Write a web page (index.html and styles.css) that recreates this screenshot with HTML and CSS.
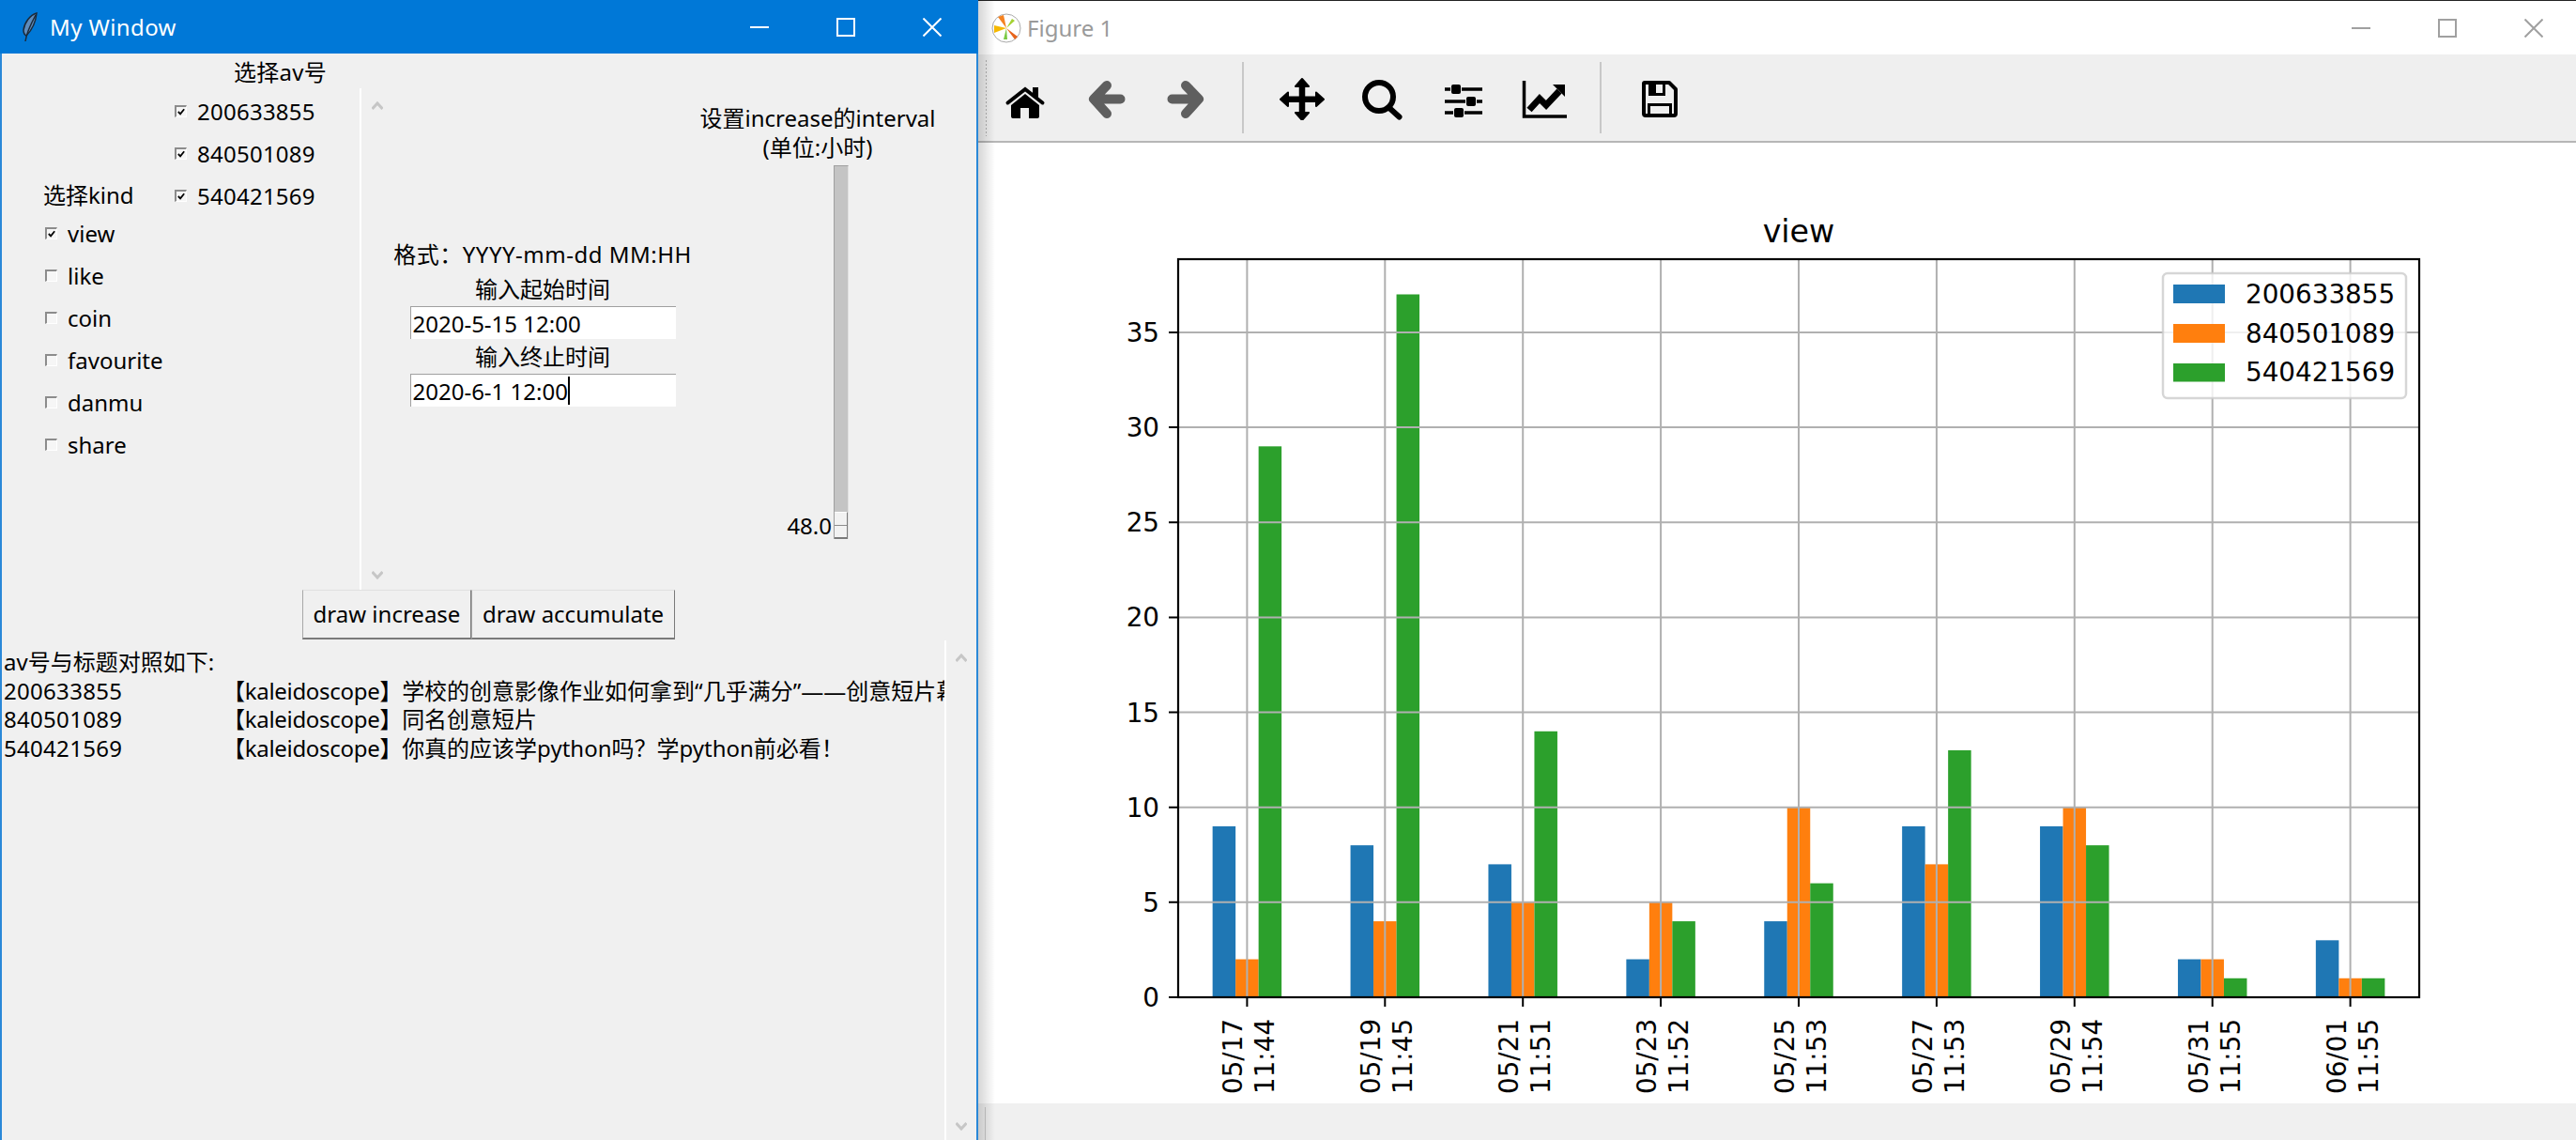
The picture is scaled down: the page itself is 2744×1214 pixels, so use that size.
FILE: index.html
```html
<!DOCTYPE html>
<html lang="zh-CN">
<head>
  <meta charset="UTF-8">
  <title>My Window</title>
  <link rel="stylesheet" href="styles.css">
</head>
<body>
<div class="desktop">

  <!-- tk window -->
  <div class="tk-window">
    <div class="tk-title">
      <svg class="feather" viewBox="0 0 18 32">
        <path d="M16 1C9 3 3 11 2 19c0 3 1 5 3 6C10 20 15 11 16 1z" fill="#5f8cbc" stroke="#1c2a3a" stroke-width="1.5"/>
        <path d="M4 31C5 24 9 14 15 3" fill="none" stroke="#1c2a3a" stroke-width="1.5"/>
      </svg>
      <span class="tk-title-text">My Window</span>
      <div class="caption-btns">
        <div class="caption-btn"><svg viewBox="0 0 20 20"><path d="M0 10H20"/></svg></div>
        <div class="caption-btn"><svg viewBox="0 0 20 20"><path d="M1 1H19V19H1z"/></svg></div>
        <div class="caption-btn"><svg viewBox="0 0 20 20"><path d="M0.5 0.5L19.5 19.5M19.5 0.5L0.5 19.5"/></svg></div>
      </div>
    </div>

    <div class="tk-top">
      <div class="kind-col">
        <div class="kind-head">选择kind</div>
        <div class="check-row"><span class="box"><svg viewBox="0 0 11 11"><path d="M2 5.5L4.5 8L9 2.5"/></svg></span>view</div>
        <div class="check-row"><span class="box"></span>like</div>
        <div class="check-row"><span class="box"></span>coin</div>
        <div class="check-row"><span class="box"></span>favourite</div>
        <div class="check-row"><span class="box"></span>danmu</div>
        <div class="check-row"><span class="box"></span>share</div>
      </div>

      <div class="av-col">
        <div class="av-head">选择av号</div>
        <div class="check-row"><span class="box"><svg viewBox="0 0 11 11"><path d="M2 5.5L4.5 8L9 2.5"/></svg></span>200633855</div>
        <div class="check-row"><span class="box"><svg viewBox="0 0 11 11"><path d="M2 5.5L4.5 8L9 2.5"/></svg></span>840501089</div>
        <div class="check-row"><span class="box"><svg viewBox="0 0 11 11"><path d="M2 5.5L4.5 8L9 2.5"/></svg></span>540421569</div>
      </div>

      <div class="canvas-col">
        <div class="rail rail-canvas">
          <svg class="chevron" viewBox="0 0 12 9"><path d="M0.5 8L6 2L11.5 8"/></svg>
          <svg class="chevron" viewBox="0 0 12 9"><path d="M0.5 1L6 7L11.5 1"/></svg>
        </div>

        <div class="time-col">
          <div class="time-label time-format">格式：YYYY-mm-dd MM:HH</div>
          <div class="time-label">输入起始时间</div>
          <div class="entry">2020-5-15 12:00</div>
          <div class="time-label">输入终止时间</div>
          <div class="entry">2020-6-1 12:00<span class="caret"></span></div>
        </div>

        <div class="interval-col">
          <div class="interval-head">设置increase的interval<br>(单位:小时)</div>
          <div class="scale-row">
            <div class="scale-value">48.0</div>
            <div class="trough"><div class="thumb"></div></div>
          </div>
        </div>
      </div>
    </div>

    <div class="btn-row">
      <div class="tk-btn btn-inc">draw increase</div>
      <div class="tk-btn btn-acc">draw accumulate</div>
    </div>

    <div class="text-area">
      <div class="text-out">
        <div class="text-line">av号与标题对照如下:</div>
        <div class="text-line"><span class="av-id">200633855</span><span class="av-tag">【kaleidoscope】</span>学校的创意影像作业如何拿到“几乎满分”——创意短片幕后</div>
        <div class="text-line"><span class="av-id">840501089</span><span class="av-tag">【kaleidoscope】</span>同名创意短片</div>
        <div class="text-line"><span class="av-id">540421569</span><span class="av-tag">【kaleidoscope】</span>你真的应该学python吗？学python前必看！</div>
      </div>
      <div class="rail rail-text">
        <svg class="chevron" viewBox="0 0 12 9"><path d="M0.5 8L6 2L11.5 8"/></svg>
        <svg class="chevron" viewBox="0 0 12 9"><path d="M0.5 1L6 7L11.5 1"/></svg>
      </div>
    </div>
  </div>

  <!-- matplotlib window -->
  <div class="fig-window">
    <div class="fig-title">
      <svg class="mpl-logo" viewBox="0 0 32 32">
        <circle cx="16" cy="16" r="15" fill="#fff" stroke="#aaa" stroke-width="1"/>
        <path d="M16 16L7 4L13 2z" fill="#f58220"/>
        <path d="M16 16L3 13L3 21z" fill="#f5b800"/>
        <path d="M16 16L22 6L25 8z" fill="#a4d233"/>
        <path d="M16 16L13 28L17 28z" fill="#7ac943"/>
        <path d="M16 16L28 25L25 28z" fill="#e8641b"/>
      </svg>
      <span class="fig-title-text">Figure 1</span>
      <div class="caption-btns">
        <div class="caption-btn"><svg viewBox="0 0 20 20"><path d="M0 10H20"/></svg></div>
        <div class="caption-btn"><svg viewBox="0 0 20 20"><path d="M1 1H19V19H1z"/></svg></div>
        <div class="caption-btn"><svg viewBox="0 0 20 20"><path d="M0.5 0.5L19.5 19.5M19.5 0.5L0.5 19.5"/></svg></div>
      </div>
    </div>

    <div class="toolbar">
      <div class="gripper"></div>
      <svg class="tool" viewBox="0 0 48 48">
        <path d="M5.5 29.5L24 15L42.5 29.5" fill="none" stroke="#000" stroke-width="4" stroke-linecap="round"/>
        <rect x="32" y="13" width="6" height="11"/>
        <path d="M24 20L39 32V44a2 2 0 0 1-2 2H28V35H19V46H11a2 2 0 0 1-2-2V32z"/>
      </svg>
      <svg class="tool" viewBox="0 0 48 48">
        <path d="M25 11L11 25.5L25 41M11 25.5H39.5" fill="none" stroke="#5f5f5f" stroke-width="10" stroke-linecap="round" stroke-linejoin="round"/>
      </svg>
      <svg class="tool" viewBox="0 0 48 48">
        <path d="M23 11L37 25.5L23 41M37 25.5H8.5" fill="none" stroke="#5f5f5f" stroke-width="10" stroke-linecap="round" stroke-linejoin="round"/>
      </svg>
      <div class="tool-sep"></div>
      <svg class="tool" viewBox="0 0 48 48">
        <path d="M24 8V44M6 25.7H42" fill="none" stroke="#000" stroke-width="6.5"/>
        <path d="M24 4L31 12H17zM24 48L31 40H17zM1 25.7L9 18.5V33zM47 25.7L39 18.5V33z" stroke="#000" stroke-width="2" stroke-linejoin="round"/>
      </svg>
      <svg class="tool" viewBox="0 0 48 48">
        <circle cx="20" cy="23" r="15" fill="none" stroke="#000" stroke-width="6"/>
        <path d="M31 35L41.5 44.5" fill="none" stroke="#000" stroke-width="6" stroke-linecap="round"/>
      </svg>
      <svg class="tool" viewBox="0 0 48 48">
        <path d="M4 15H10M22 15H44M4 28H26M38 28H44M4 40H13M25 40H44" fill="none" stroke="#000" stroke-width="3.5"/>
        <rect x="11" y="10" width="10" height="10" rx="2"/>
        <rect x="27" y="23" width="10" height="10" rx="2"/>
        <rect x="14" y="35" width="10" height="10" rx="2"/>
      </svg>
      <svg class="tool" viewBox="0 0 48 48">
        <path d="M2.5 6V44H48" fill="none" stroke="#000" stroke-width="3.5"/>
        <path d="M8 37L19 25L26 32L40 17" fill="none" stroke="#000" stroke-width="7"/>
        <path d="M33 10H46V23z"/>
      </svg>
      <div class="tool-sep"></div>
      <svg class="tool" viewBox="0 0 48 48">
        <path d="M8 8H34L41 15V41a2 2 0 0 1-2 2H9a2 2 0 0 1-2-2V9a1 1 0 0 1 1-1z" fill="none" stroke="#000" stroke-width="4" stroke-linejoin="round"/>
        <path d="M12 8H30V22H12zM20 10V19H27V10z" fill-rule="evenodd"/>
        <path d="M11 30H37V42H34V33H14V42H11z"/>
      </svg>
    </div>

    <svg class="plot" viewBox="1042 152 1702 1023">
      <!-- bars -->
      <g transform="translate(1328.4 1062)">
        <rect class="s1" x="-36.75" y="-182.07" width="24.5" height="182.07"/>
        <rect class="s2" x="-12.25" y="-40.46" width="24.5" height="40.46"/>
        <rect class="s3" x="12.25" y="-586.67" width="24.5" height="586.67"/>
      </g>
      <g transform="translate(1475.3 1062)">
        <rect class="s1" x="-36.75" y="-161.84" width="24.5" height="161.84"/>
        <rect class="s2" x="-12.25" y="-80.92" width="24.5" height="80.92"/>
        <rect class="s3" x="12.25" y="-748.51" width="24.5" height="748.51"/>
      </g>
      <g transform="translate(1622.2 1062)">
        <rect class="s1" x="-36.75" y="-141.61" width="24.5" height="141.61"/>
        <rect class="s2" x="-12.25" y="-101.15" width="24.5" height="101.15"/>
        <rect class="s3" x="12.25" y="-283.22" width="24.5" height="283.22"/>
      </g>
      <g transform="translate(1769.1 1062)">
        <rect class="s1" x="-36.75" y="-40.46" width="24.5" height="40.46"/>
        <rect class="s2" x="-12.25" y="-101.15" width="24.5" height="101.15"/>
        <rect class="s3" x="12.25" y="-80.92" width="24.5" height="80.92"/>
      </g>
      <g transform="translate(1916 1062)">
        <rect class="s1" x="-36.75" y="-80.92" width="24.5" height="80.92"/>
        <rect class="s2" x="-12.25" y="-202.3" width="24.5" height="202.3"/>
        <rect class="s3" x="12.25" y="-121.38" width="24.5" height="121.38"/>
      </g>
      <g transform="translate(2062.9 1062)">
        <rect class="s1" x="-36.75" y="-182.07" width="24.5" height="182.07"/>
        <rect class="s2" x="-12.25" y="-141.61" width="24.5" height="141.61"/>
        <rect class="s3" x="12.25" y="-262.99" width="24.5" height="262.99"/>
      </g>
      <g transform="translate(2209.8 1062)">
        <rect class="s1" x="-36.75" y="-182.07" width="24.5" height="182.07"/>
        <rect class="s2" x="-12.25" y="-202.3" width="24.5" height="202.3"/>
        <rect class="s3" x="12.25" y="-161.84" width="24.5" height="161.84"/>
      </g>
      <g transform="translate(2356.7 1062)">
        <rect class="s1" x="-36.75" y="-40.46" width="24.5" height="40.46"/>
        <rect class="s2" x="-12.25" y="-40.46" width="24.5" height="40.46"/>
        <rect class="s3" x="12.25" y="-20.23" width="24.5" height="20.23"/>
      </g>
      <g transform="translate(2503.6 1062)">
        <rect class="s1" x="-36.75" y="-60.69" width="24.5" height="60.69"/>
        <rect class="s2" x="-12.25" y="-20.23" width="24.5" height="20.23"/>
        <rect class="s3" x="12.25" y="-20.23" width="24.5" height="20.23"/>
      </g>

      <!-- grid -->
      <path class="grid" d="M1328.4 276V1062M1475.3 276V1062M1622.2 276V1062M1769.1 276V1062M1916 276V1062M2062.9 276V1062M2209.8 276V1062M2356.7 276V1062M2503.6 276V1062"/>
      <path class="grid" d="M1255 960.85H2577M1255 859.7H2577M1255 758.55H2577M1255 657.4H2577M1255 556.25H2577M1255 455.1H2577M1255 353.95H2577"/>

      <!-- axes -->
      <path class="ticks" d="M1245 1062H1255M1245 960.85H1255M1245 859.7H1255M1245 758.55H1255M1245 657.4H1255M1245 556.25H1255M1245 455.1H1255M1245 353.95H1255"/>
      <path class="ticks" d="M1328.4 1062V1072M1475.3 1062V1072M1622.2 1062V1072M1769.1 1062V1072M1916 1062V1072M2062.9 1062V1072M2209.8 1062V1072M2356.7 1062V1072M2503.6 1062V1072"/>
      <rect class="spines" x="1255" y="276" width="1322" height="786"/>

      <text class="plot-title" x="1916" y="258">view</text>

      <g class="ylabels">
        <text x="1235" y="1072">0</text>
        <text x="1235" y="971">5</text>
        <text x="1235" y="870">10</text>
        <text x="1235" y="769">15</text>
        <text x="1235" y="667">20</text>
        <text x="1235" y="566">25</text>
        <text x="1235" y="465">30</text>
        <text x="1235" y="364">35</text>
      </g>

      <g class="xlabels">
        <g transform="translate(1328.4 1165) rotate(-90)"><text y="-5">05/17</text><text y="29">11:44</text></g>
        <g transform="translate(1475.3 1165) rotate(-90)"><text y="-5">05/19</text><text y="29">11:45</text></g>
        <g transform="translate(1622.2 1165) rotate(-90)"><text y="-5">05/21</text><text y="29">11:51</text></g>
        <g transform="translate(1769.1 1165) rotate(-90)"><text y="-5">05/23</text><text y="29">11:52</text></g>
        <g transform="translate(1916 1165) rotate(-90)"><text y="-5">05/25</text><text y="29">11:53</text></g>
        <g transform="translate(2062.9 1165) rotate(-90)"><text y="-5">05/27</text><text y="29">11:53</text></g>
        <g transform="translate(2209.8 1165) rotate(-90)"><text y="-5">05/29</text><text y="29">11:54</text></g>
        <g transform="translate(2356.7 1165) rotate(-90)"><text y="-5">05/31</text><text y="29">11:55</text></g>
        <g transform="translate(2503.6 1165) rotate(-90)"><text y="-5">06/01</text><text y="29">11:55</text></g>
      </g>

      <!-- legend -->
      <rect class="legend-box" x="2304" y="291" width="259" height="133" rx="5"/>
      <rect class="s1" x="2315" y="303" width="55" height="20"/>
      <rect class="s2" x="2315" y="345" width="55" height="20"/>
      <rect class="s3" x="2315" y="387" width="55" height="19.5"/>
      <g class="legend-text">
        <text x="2392" y="323">200633855</text>
        <text x="2392" y="365">840501089</text>
        <text x="2392" y="406">540421569</text>
      </g>
    </svg>

    <div class="statusbar"><div class="status-sep"></div></div>
  </div>

</div>
</body>
</html>
```

FILE: styles.css
```css
html, body {
  margin: 0;
  padding: 0;
  overflow: hidden;
}

body {
  font-family: "Noto Sans", "Noto Sans CJK SC", sans-serif;
  font-size: 24px;
  color: #000;
}

.desktop {
  display: flex;
  width: 2744px;
  height: 1214px;
}

/* window title buttons */
.caption-btns {
  display: flex;
  margin-left: auto;
}

.caption-btn {
  width: 92px;
  display: flex;
  align-items: center;
  justify-content: center;
}

.caption-btn svg {
  width: 20px;
  height: 20px;
  fill: none;
  stroke-width: 2;
}

/* tk window */
.tk-window {
  width: 1042px;
  height: 1214px;
  box-sizing: border-box;
  border-left: 2px solid #2a88d8;
  border-right: 2px solid #2a88d8;
  background-color: #f0f0f0;
  display: flex;
  flex-direction: column;
  flex-shrink: 0;
}

.tk-title {
  height: 57px;
  margin: 0 -2px;
  padding: 0 3px 0 23px;
  background-color: #0078d7;
  color: #fff;
  display: flex;
  align-items: center;
  flex-shrink: 0;
}

.tk-title .caption-btn svg {
  stroke: #fff;
}

.tk-title .caption-btn {
  height: 57px;
}

.feather {
  width: 18px;
  height: 32px;
  margin-right: 12px;
}

.tk-title-text {
  line-height: 57px;
  letter-spacing: 0.4px;
}

.tk-top {
  display: flex;
  height: 571px;
  flex-shrink: 0;
}

.kind-col {
  width: 140px;
  margin-left: 44px;
  padding-top: 132px;
  flex-shrink: 0;
}

.kind-head {
  height: 38px;
  line-height: 38px;
}

.av-col {
  width: 198px;
  flex-shrink: 0;
  letter-spacing: 0.25px;
}

.av-head {
  height: 40px;
  line-height: 40px;
  padding-left: 63px;
}

.check-row {
  height: 45px;
  box-sizing: border-box;
  padding-bottom: 3px;
  display: flex;
  align-items: center;
  white-space: nowrap;
}

.box {
  width: 13px;
  height: 13px;
  box-sizing: border-box;
  margin-right: 11px;
  border-top: 2px solid #8c8c8c;
  border-left: 2px solid #8c8c8c;
  border-right: 1px solid #fff;
  border-bottom: 1px solid #fff;
  background-color: #f6f6f6;
  flex-shrink: 0;
  display: block;
}

.kind-col .box {
  margin-left: 2px;
}

.box svg {
  display: block;
  width: 10px;
  height: 10px;
  fill: none;
  stroke: #000;
  stroke-width: 2;
}

.canvas-col {
  flex: 1;
  display: flex;
  margin-top: 37px;
  margin-left: -1px;
  border-left: 2px solid #fff;
  min-width: 0;
}

.rail {
  display: flex;
  flex-direction: column;
  align-items: center;
  justify-content: space-between;
  box-sizing: border-box;
  flex-shrink: 0;
}

.rail-canvas {
  width: 33px;
  padding: 14px 0 11px;
}

.chevron {
  width: 12px;
  height: 9px;
  fill: none;
  stroke: #c6c6c6;
  stroke-width: 3;
}

.time-col {
  width: 320px;
  padding-top: 158px;
  flex-shrink: 0;
  display: flex;
  flex-direction: column;
  align-items: center;
}

.time-label {
  height: 37px;
  line-height: 37px;
  white-space: nowrap;
}

.time-format {
  letter-spacing: 0.5px;
}

.entry {
  width: 283px;
  height: 35px;
  box-sizing: border-box;
  padding-left: 2px;
  background-color: #fff;
  border-top: 1px solid #a0a0a0;
  border-left: 1px solid #a0a0a0;
  line-height: 33px;
  white-space: nowrap;
  display: flex;
  align-items: center;
}

.caret {
  width: 2px;
  height: 30px;
  background-color: #000;
}

.interval-col {
  width: 266px;
  flex-shrink: 0;
  padding-top: 16px;
}

.interval-head {
  line-height: 31px;
  text-align: center;
  white-space: nowrap;
}

.scale-row {
  display: flex;
  align-items: flex-end;
  margin-top: 4px;
  padding-left: 100px;
}

.scale-value {
  width: 48px;
  height: 29px;
  line-height: 29px;
  margin-right: 2px;
  text-align: right;
}

.trough {
  width: 16px;
  height: 398px;
  box-sizing: border-box;
  background-color: #c4c4c4;
  border-top: 1px solid #a0a0a0;
  border-left: 1px solid #a0a0a0;
  border-right: 1px solid #e0e0e0;
  display: flex;
  flex-direction: column;
  justify-content: flex-end;
}

.thumb {
  height: 29px;
  box-sizing: border-box;
  background: linear-gradient(#f2f2f2 13px, #8c8c8c 13px, #8c8c8c 14px, #f2f2f2 14px);
  border-top: 1px solid #fff;
  border-bottom: 2px solid #7a7a7a;
  border-right: 1px solid #7a7a7a;
}

.btn-row {
  display: flex;
  justify-content: center;
  height: 54px;
  padding-right: 1px;
  flex-shrink: 0;
}

.tk-btn {
  height: 53px;
  box-sizing: border-box;
  border-top: 1px solid #e0e0e0;
  border-left: 1px solid #a8a8a8;
  border-right: 1px solid #7a7a7a;
  border-bottom: 2px solid #7a7a7a;
  line-height: 50px;
  text-align: center;
  white-space: nowrap;
}

.btn-inc {
  width: 180px;
}

.btn-acc {
  width: 217px;
}

.text-area {
  flex: 1;
  display: flex;
  min-height: 0;
}

.text-out {
  width: 1004px;
  box-sizing: border-box;
  padding: 8px 0 0 2px;
  overflow: hidden;
  flex-shrink: 0;
}

.text-line {
  height: 30.5px;
  line-height: 30.5px;
  white-space: nowrap;
  display: flex;
}

.av-id {
  width: 233px;
  flex-shrink: 0;
  letter-spacing: 0.3px;
}

.av-tag {
  letter-spacing: -0.3px;
}

.rail-text {
  flex: 1;
  border-left: 2px solid #fff;
  padding: 14px 0 10px;
}

/* figure window */
.fig-window {
  flex: 1;
  position: relative;
  display: flex;
  flex-direction: column;
  background-color: #fff;
  min-width: 0;
}

/* drop shadow of the window in front */
.fig-window::before {
  content: "";
  position: absolute;
  top: 0;
  bottom: 0;
  left: 0;
  width: 18px;
  background: linear-gradient(to right, rgba(0, 0, 0, 0.16), rgba(0, 0, 0, 0));
}

.fig-title {
  height: 58px;
  box-sizing: border-box;
  border-top: 1px solid #222;
  padding-left: 14px;
  display: flex;
  align-items: center;
  flex-shrink: 0;
}

.fig-title .caption-btns {
  margin-right: -1px;
}

.fig-title .caption-btn {
  height: 57px;
}

.fig-title .caption-btn svg {
  stroke: #a0a0a0;
}

.mpl-logo {
  width: 32px;
  height: 32px;
  margin-right: 6px;
}

.fig-title-text {
  color: #9a9a9a;
}

.toolbar {
  height: 94px;
  box-sizing: border-box;
  padding-left: 7px;
  background-color: #efefef;
  border-bottom: 2px solid #b6b6b6;
  display: flex;
  align-items: center;
  flex-shrink: 0;
}

.gripper {
  width: 4px;
  height: 82px;
  margin-right: 15px;
  background-image: radial-gradient(#b0b0b0 1px, transparent 1px);
  background-size: 3px 4px;
}

.tool {
  width: 48px;
  height: 48px;
  flex-shrink: 0;
}

.tool + .tool {
  margin-left: 38px;
}

.tool-sep {
  width: 2px;
  height: 76px;
  margin: 0 38px 0 35px;
  background-color: #c8c8c8;
  flex-shrink: 0;
}

.plot {
  display: block;
  width: 1702px;
  height: 1023px;
  flex-shrink: 0;
}

.plot text {
  font-family: "DejaVu Sans", sans-serif;
  font-size: 27.8px;
  fill: #000;
}

.s1 {
  fill: #1f77b4;
}

.s2 {
  fill: #ff7f0e;
}

.s3 {
  fill: #2ca02c;
}

.grid {
  fill: none;
  stroke: #b0b0b0;
  stroke-width: 2;
}

.ticks {
  fill: none;
  stroke: #000;
  stroke-width: 2;
}

.spines {
  fill: none;
  stroke: #000;
  stroke-width: 2.2;
}

.plot .plot-title {
  font-size: 33.3px;
  text-anchor: middle;
}

.ylabels text {
  text-anchor: end;
}

.legend-box {
  fill: rgba(255, 255, 255, 0.8);
  stroke: rgba(204, 204, 204, 0.8);
  stroke-width: 2.5;
}

.statusbar {
  flex: 1;
  background-color: #f0f0f0;
  padding: 4px 0 0 7px;
  box-sizing: border-box;
}

.status-sep {
  width: 1px;
  height: 100%;
  background-color: #c8c8c8;
}
```
